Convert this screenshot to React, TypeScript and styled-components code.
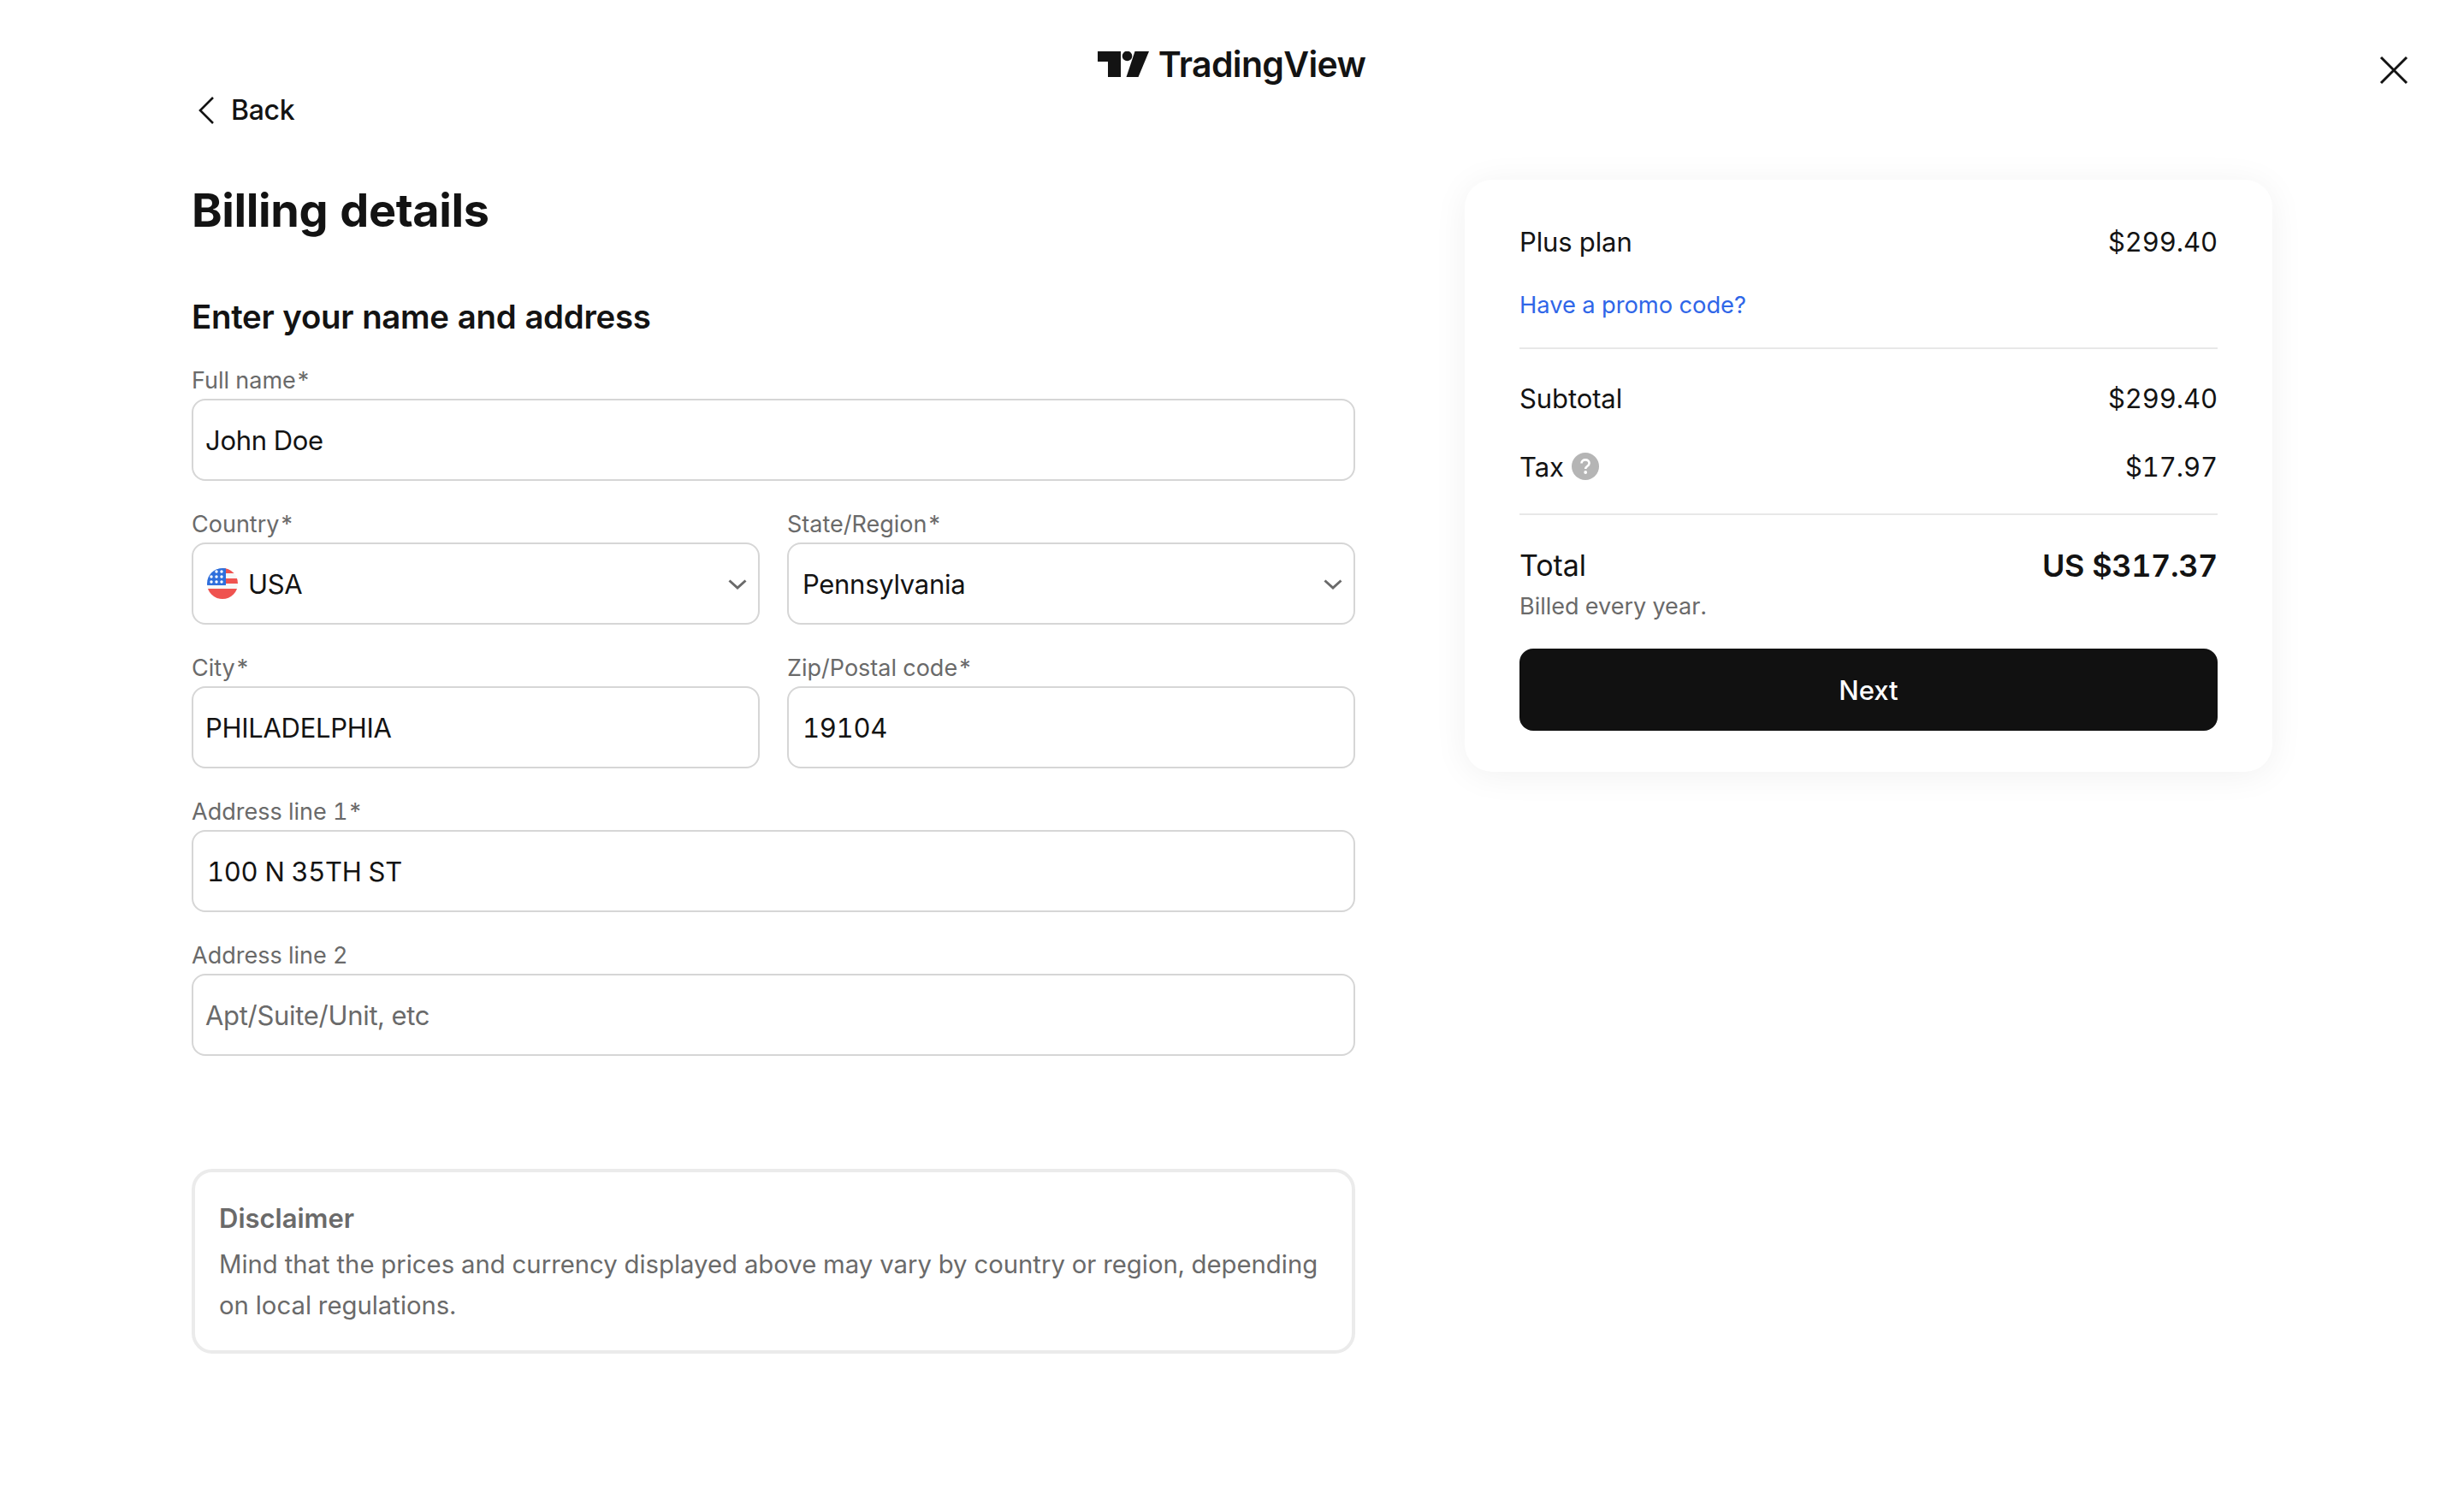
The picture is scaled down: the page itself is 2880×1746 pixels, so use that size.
import React from "react";
import styled, { createGlobalStyle } from "styled-components";

const Global = createGlobalStyle`
  html, body { margin: 0; padding: 0; background: #fff; }
  body {
    font-family: Inter, "Liberation Sans", sans-serif;
    color: #131313;
    font-variant-numeric: tabular-nums;
    -webkit-font-smoothing: antialiased;
  }
  * { box-sizing: border-box; }
`;

const Page = styled.div`
  position: relative;
  width: 2880px;
  height: 1746px;
  background: #fff;
  overflow: hidden;
`;
const Header = styled.header`
  display: flex;
  justify-content: center;
  align-items: center;
  gap: 11px;
  height: 105px;
  padding-top: 45px;
  padding-right: 1px;
`;
const Wordmark = styled.span`
  font-size: 41px;
  font-weight: 600;
  letter-spacing: -0.65px;
  line-height: 50px;
`;
const Close = styled.button`
  position: absolute;
  top: 60px;
  right: 60px;
  width: 44px;
  height: 44px;
  padding: 0;
  border: 0;
  background: none;
  display: flex;
`;
const Main = styled.main`
  display: flex;
  align-items: flex-start;
  gap: 128px;
  padding-left: 224px;
`;
const FormColumn = styled.div`
  width: 1360px;
  display: flex;
  flex-direction: column;
`;
const BackLink = styled.a`
  display: flex;
  align-items: center;
  gap: 20px;
  height: 48px;
  padding-left: 8px;
  font-size: 32px;
  font-weight: 500;
  line-height: 48px;
  letter-spacing: -0.3px;
`;
const Title = styled.h1`
  margin: 59px 0 0;
  font-size: 54px;
  font-weight: 700;
  line-height: 68px;
  letter-spacing: -0.4px;
`;
const Subtitle = styled.h2`
  margin: 66px 0 0;
  font-size: 38.4px;
  font-weight: 600;
  line-height: 48px;
  letter-spacing: -0.3px;
`;
const Form = styled.div`
  margin-top: 32px;
  display: grid;
  grid-template-columns: 664px 664px;
  gap: 32px;
`;
const Field = styled.div<{ $wide?: boolean }>`
  display: flex;
  flex-direction: column;
  gap: 3px;
  grid-column: ${(p) => (p.$wide ? "1 / -1" : "auto")};
`;
const Label = styled.div`
  margin-top: 1px;
  font-size: 27px;
  line-height: 36px;
  color: #6a6a6a;
`;
const InputBox = styled.div<{ $muted?: boolean; $inset?: number }>`
  height: 96px;
  border: 2px solid #d6d6d6;
  border-radius: 16px;
  display: flex;
  align-items: center;
  padding: 2px 13px 0 ${(p) => p.$inset ?? 14}px;
  font-size: 31px;
  line-height: 48px;
  letter-spacing: -0.3px;
  color: ${(p) => (p.$muted ? "#6a6a6a" : "#131313")};
  background: #fff;
`;
const FieldValue = styled.span`
  flex: 1;
`;
const Flag = styled.svg`
  width: 36px;
  height: 36px;
  margin: -2px 12px 0 2px;
`;
const Disclaimer = styled.section`
  margin-top: 132px;
  height: 216px;
  border: 4px solid #ebebeb;
  border-radius: 24px;
  padding: 30px 28px;
  color: #6a6a6a;
`;
const DisclaimerTitle = styled.div`
  font-size: 31px;
  font-weight: 600;
  line-height: 48px;
`;
const DisclaimerBody = styled.p`
  margin: 6px 0 0;
  font-size: 29.3px;
  line-height: 48px;
`;
const Card = styled.aside`
  margin-top: 105px;
  width: 944px;
  height: 692px;
  padding: 49px 64px 48px;
  border-radius: 32px;
  background: #fff;
  box-shadow: 0 4px 40px rgba(0, 0, 0, 0.06);
  display: flex;
  flex-direction: column;
`;
const Row = styled.div<{ $mt?: number }>`
  display: flex;
  justify-content: space-between;
  align-items: center;
  margin-top: ${(p) => p.$mt ?? 0}px;
  font-size: 31px;
  line-height: 48px;
  letter-spacing: -0.1px;
`;
const RowLabel = styled.span`
  display: flex;
  align-items: center;
  gap: 9px;
`;
const Promo = styled.a`
  margin-top: 30px;
  font-size: 27.3px;
  line-height: 40px;
  color: #2f66e8;
`;
const Divider = styled.hr<{ $mt: number }>`
  width: 100%;
  height: 2px;
  margin: ${(p) => p.$mt}px 0 0;
  border: 0;
  background: #e8e8e8;
`;
const TotalLabel = styled.span`
  font-size: 34px;
  font-weight: 400;
`;
const TotalValue = styled.span`
  font-size: 36px;
  font-weight: 600;
  letter-spacing: -0.4px;
`;
const Billed = styled.div`
  margin-top: 6px;
  font-size: 27px;
  line-height: 36px;
  color: #6a6a6a;
`;
const NextButton = styled.button`
  margin-top: 31px;
  height: 96px;
  border: 0;
  border-radius: 16px;
  background: #111;
  color: #fff;
  font-family: inherit;
  font-size: 31px;
  font-weight: 500;
`;
const Help = styled.svg`
  width: 32px;
  height: 32px;
  margin-top: -2px;
`;

const Chevron = () => (
  <svg width="22" height="12" viewBox="0 0 22 12" fill="none">
    <path d="M1.5 1.5 11 10l9.5-8.5" stroke="#6a6a6a" strokeWidth="3" />
  </svg>
);

const UsFlag = () => (
  <Flag viewBox="0 0 36 36">
    <defs>
      <clipPath id="flagClip">
        <circle cx="18" cy="18" r="18" />
      </clipPath>
    </defs>
    <g clipPath="url(#flagClip)">
      <rect width="36" height="36" fill="#f7f7f7" />
      <rect x="18" y="0" width="18" height="6" fill="#ef5350" />
      <rect x="20" y="12" width="16" height="6" fill="#ef5350" />
      <rect y="24" width="36" height="12" fill="#ef5350" />
      <rect width="22" height="20" fill="#2f6fdc" />
      {[
        [11, 4], [17, 4],
        [5, 10], [11, 10], [17, 10],
        [5, 16], [11, 16], [17, 16],
      ].map(([x, y]) => (
        <circle key={`${x}-${y}`} cx={x} cy={y} r="1.7" fill="#fff" />
      ))}
    </g>
  </Flag>
);

const Logo = () => (
  <svg width="60" height="30" viewBox="0 0 60 30" fill="#131313">
    <path d="M0 0h27v30H12V12H0z" />
    <circle cx="34.5" cy="5.5" r="5.8" />
    <path d="M43.5 0H60L47.5 30H33.5z" />
  </svg>
);

export default function App() {
  return (
    <Page>
      <Global />
      <Header>
        <Logo />
        <Wordmark>TradingView</Wordmark>
      </Header>
      <Close aria-label="Close">
        <svg width="44" height="44" viewBox="0 0 44 44" fill="none">
          <path d="M7 7 37 37M37 7 7 37" stroke="#131313" strokeWidth="3" />
        </svg>
      </Close>
      <Main>
        <FormColumn>
          <BackLink>
            <svg width="18" height="32" viewBox="0 0 18 32" fill="none">
              <path d="M17 1 2 16l15 15" stroke="#131313" strokeWidth="2.6" />
            </svg>
            Back
          </BackLink>
          <Title>Billing details</Title>
          <Subtitle>Enter your name and address</Subtitle>
          <Form>
            <Field $wide>
              <Label>Full name*</Label>
              <InputBox>John Doe</InputBox>
            </Field>
            <Field>
              <Label>Country*</Label>
              <InputBox>
                <UsFlag />
                <FieldValue>USA</FieldValue>
                <Chevron />
              </InputBox>
            </Field>
            <Field>
              <Label>State/Region*</Label>
              <InputBox $inset={16}>
                <FieldValue>Pennsylvania</FieldValue>
                <Chevron />
              </InputBox>
            </Field>
            <Field>
              <Label>City*</Label>
              <InputBox>PHILADELPHIA</InputBox>
            </Field>
            <Field>
              <Label>Zip/Postal code*</Label>
              <InputBox $inset={16}>19104</InputBox>
            </Field>
            <Field $wide>
              <Label>Address line 1*</Label>
              <InputBox $inset={16}>100 N 35TH ST</InputBox>
            </Field>
            <Field $wide>
              <Label>Address line 2</Label>
              <InputBox $muted>Apt/Suite/Unit, etc</InputBox>
            </Field>
          </Form>
          <Disclaimer>
            <DisclaimerTitle>Disclaimer</DisclaimerTitle>
            <DisclaimerBody>
              Mind that the prices and currency displayed above may vary by country or region, depending on local regulations.
            </DisclaimerBody>
          </Disclaimer>
        </FormColumn>
        <Card>
          <Row>
            <span>Plus plan</span>
            <span>$299.40</span>
          </Row>
          <Promo>Have a promo code?</Promo>
          <Divider $mt={29} />
          <Row $mt={34}>
            <span>Subtotal</span>
            <span>$299.40</span>
          </Row>
          <Row $mt={32}>
            <RowLabel>
              Tax
              <Help viewBox="0 0 32 32">
                <circle cx="16" cy="16" r="16" fill="#b5b5b5" />
                <path d="M11.5 12.6c0-2.6 2-4.2 4.6-4.2s4.5 1.6 4.5 3.9c0 3.4-4.4 3.4-4.4 6.6" fill="none" stroke="#fff" strokeWidth="2.6" />
                <circle cx="16.2" cy="23" r="1.9" fill="#fff" />
              </Help>
            </RowLabel>
            <span>$17.97</span>
          </Row>
          <Divider $mt={30} />
          <Row $mt={35}>
            <TotalLabel>Total</TotalLabel>
            <TotalValue>US $317.37</TotalValue>
          </Row>
          <Billed>Billed every year.</Billed>
          <NextButton>Next</NextButton>
        </Card>
      </Main>
    </Page>
  );
}
